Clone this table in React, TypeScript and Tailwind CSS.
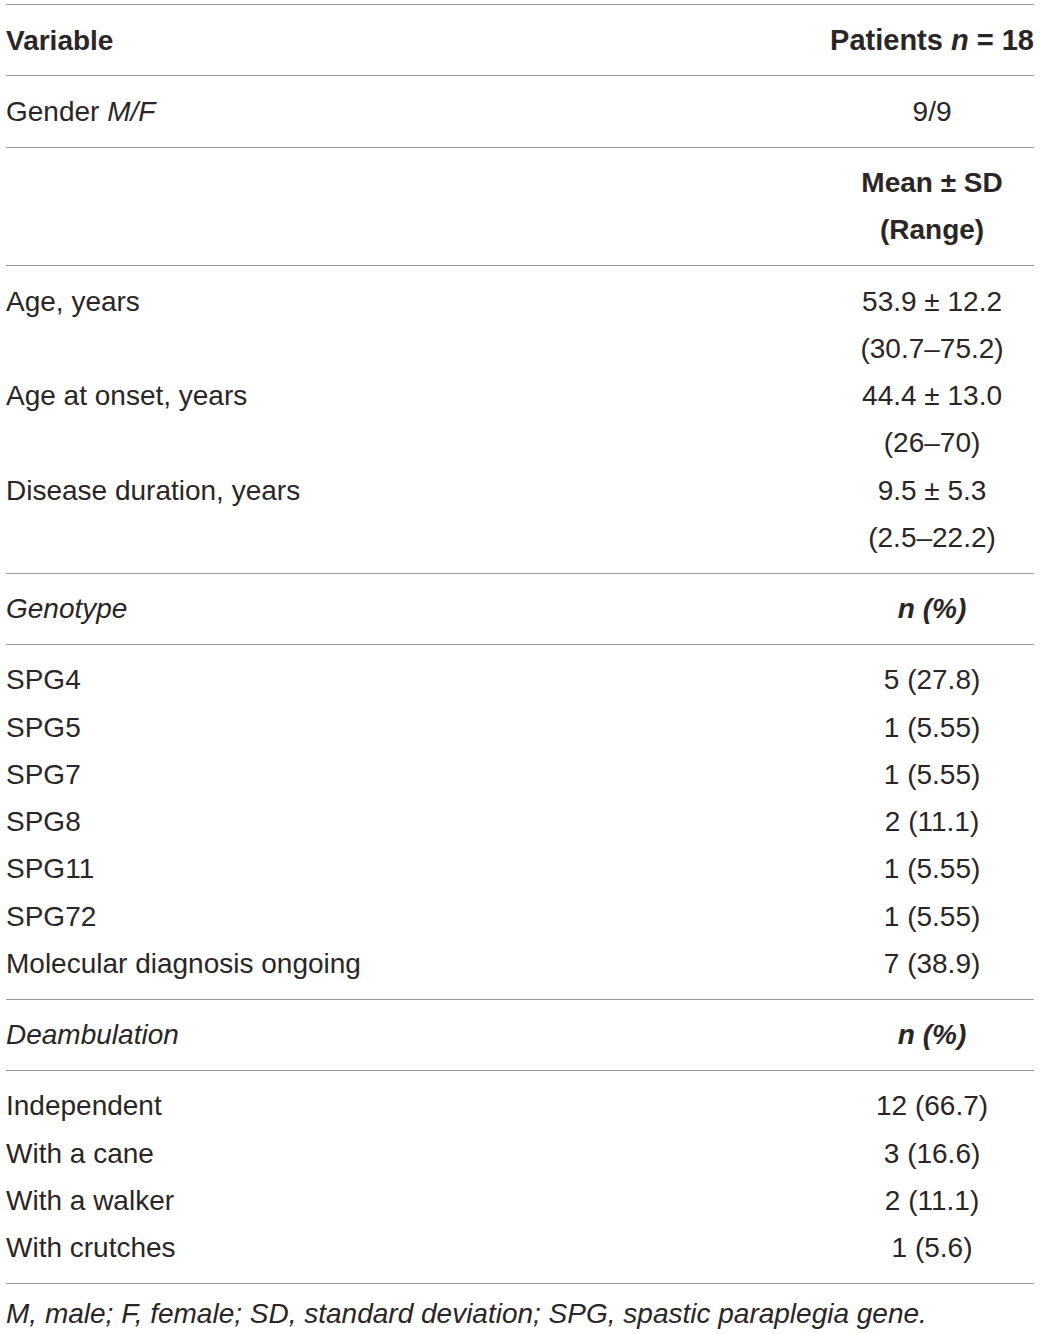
const font = { fontFamily: '"Liberation Sans", Arial, sans-serif' };

type Row = { label: React.ReactNode; value: string };

const Section = ({ children }: { children: React.ReactNode }) => (
  <tbody className="border-t border-[#999999]">{children}</tbody>
);

const cell = "align-top leading-[47.25px]";
const right = "w-px whitespace-nowrap text-center";

const Lines = ({ rows }: { rows: Row[] }) => (
  <Section>
    {rows.map((r, i) => {
      const pad = `${i === 0 ? "pt-[11.5px]" : ""} ${i === rows.length - 1 ? "pb-[11.5px]" : ""}`;
      return (
        <tr key={i}>
          <td className={`${cell} ${pad}`}>{r.label}</td>
          <td className={`${cell} ${right} ${pad}`}>{r.value}</td>
        </tr>
      );
    })}
  </Section>
);

const HeadRow = ({ label, value }: { label: React.ReactNode; value: React.ReactNode }) => (
  <Section>
    <tr>
      <td className={`${cell} py-[11.5px]`}>{label}</td>
      <td className={`${cell} ${right} py-[11.5px] font-bold`}>{value}</td>
    </tr>
  </Section>
);

export default function App() {
  return (
    <div className="min-h-[1333px] bg-white px-[6px] pt-[4px] text-[28px] text-[#2a2627]" style={font}>
      <table className="w-full border-collapse">
        <HeadRow
          label={<span className="font-bold">Variable</span>}
          value={<span className="text-[29px]">Patients <i>n</i> = 18</span>}
        />
        <Lines rows={[{ label: <>Gender <i>M/F</i></>, value: "9/9" }]} />
        <Section>
          <tr>
            <td className={`${cell} py-[11.5px]`}></td>
            <td className={`${cell} ${right} py-[11.5px] font-bold`}>
              Mean ± SD
              <br />
              (Range)
            </td>
          </tr>
        </Section>
        <Lines
          rows={[
            { label: "Age, years", value: "53.9 ± 12.2" },
            { label: "", value: "(30.7–75.2)" },
            { label: "Age at onset, years", value: "44.4 ± 13.0" },
            { label: "", value: "(26–70)" },
            { label: "Disease duration, years", value: "9.5 ± 5.3" },
            { label: "", value: "(2.5–22.2)" },
          ]}
        />
        <HeadRow label={<i>Genotype</i>} value={<i>n (%)</i>} />
        <Lines
          rows={[
            { label: "SPG4", value: "5 (27.8)" },
            { label: "SPG5", value: "1 (5.55)" },
            { label: "SPG7", value: "1 (5.55)" },
            { label: "SPG8", value: "2 (11.1)" },
            { label: "SPG11", value: "1 (5.55)" },
            { label: "SPG72", value: "1 (5.55)" },
            { label: "Molecular diagnosis ongoing", value: "7 (38.9)" },
          ]}
        />
        <HeadRow label={<i>Deambulation</i>} value={<i>n (%)</i>} />
        <Lines
          rows={[
            { label: "Independent", value: "12 (66.7)" },
            { label: "With a cane", value: "3 (16.6)" },
            { label: "With a walker", value: "2 (11.1)" },
            { label: "With crutches", value: "1 (5.6)" },
          ]}
        />
        <Section>
          <tr>
            <td colSpan={2} className="pt-[6px] italic leading-[47.25px]">
              M, male; F, female; SD, standard deviation; SPG, spastic paraplegia gene.
            </td>
          </tr>
        </Section>
      </table>
    </div>
  );
}
